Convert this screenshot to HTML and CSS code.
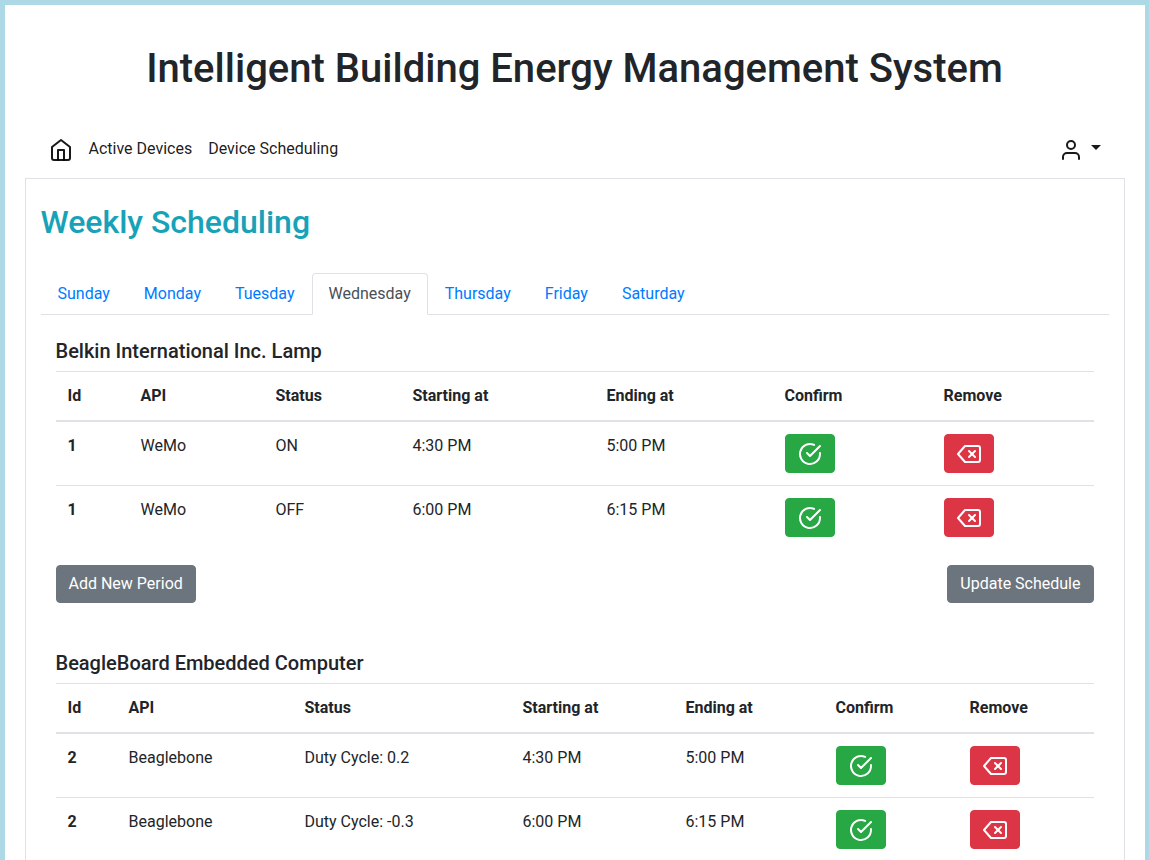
FILE: index.html
```html
<!DOCTYPE html>
<html lang="en">
<head>
<meta charset="utf-8">
<title>Intelligent Building Energy Management System</title>
<link rel="stylesheet" href="styles.css">
</head>
<body>
<svg class="defs" width="0" height="0">
  <symbol id="check" viewBox="0 0 24 24"><path d="M22 11.08V12a10 10 0 1 1-5.93-9.14"/><polyline points="22 4 12 14.01 9 11.01"/></symbol>
  <symbol id="remove" viewBox="0 0 24 24"><path d="M21 4H8l-7 8 7 8h13a2 2 0 0 0 2-2V6a2 2 0 0 0-2-2z"/><line x1="18" y1="9" x2="12" y2="15"/><line x1="12" y1="9" x2="18" y2="15"/></symbol>
</svg>
<div class="app">
  <h1>Intelligent Building Energy Management System</h1>
  <nav class="navbar">
    <a class="home" href="#"><svg class="icon" viewBox="0 0 24 24"><path d="m3 9 9-7 9 7v11a2 2 0 0 1-2 2H5a2 2 0 0 1-2-2z"/><polyline points="9 22 9 12 15 12 15 22"/></svg></a>
    <a href="#">Active Devices</a>
    <a href="#">Device Scheduling</a>
    <a class="user" href="#"><svg class="icon" viewBox="0 0 24 24"><path d="M20 21v-2a4 4 0 0 0-4-4H8a4 4 0 0 0-4 4v2"/><circle cx="12" cy="7" r="4"/></svg><span class="caret"></span></a>
  </nav>
  <main class="panel">
    <h2>Weekly Scheduling</h2>
    <div class="tabs">
      <a href="#">Sunday</a><a href="#">Monday</a><a href="#">Tuesday</a><a class="active" href="#">Wednesday</a><a href="#">Thursday</a><a href="#">Friday</a><a href="#">Saturday</a>
    </div>
    <section class="device">
      <h5>Belkin International Inc. Lamp</h5>
      <table>
        <colgroup><col style="width:73px"><col style="width:135px"><col style="width:137px"><col style="width:194px"><col style="width:178px"><col style="width:159px"><col></colgroup>
        <thead><tr><th>Id</th><th>API</th><th>Status</th><th>Starting at</th><th>Ending at</th><th>Confirm</th><th>Remove</th></tr></thead>
        <tbody>
          <tr><th>1</th><td>WeMo</td><td>ON</td><td>4:30 PM</td><td>5:00 PM</td><td><button class="btn green"><svg class="icon"><use href="#check"/></svg></button></td><td><button class="btn red"><svg class="icon"><use href="#remove"/></svg></button></td></tr>
          <tr><th>1</th><td>WeMo</td><td>OFF</td><td>6:00 PM</td><td>6:15 PM</td><td><button class="btn green"><svg class="icon"><use href="#check"/></svg></button></td><td><button class="btn red"><svg class="icon"><use href="#remove"/></svg></button></td></tr>
        </tbody>
      </table>
      <div class="actions"><button class="btn gray">Add New Period</button><button class="btn gray">Update Schedule</button></div>
    </section>
    <section class="device">
      <h5>BeagleBoard Embedded Computer</h5>
      <table>
        <colgroup><col style="width:61px"><col style="width:176px"><col style="width:218px"><col style="width:163px"><col style="width:150px"><col style="width:134px"><col></colgroup>
        <thead><tr><th>Id</th><th>API</th><th>Status</th><th>Starting at</th><th>Ending at</th><th>Confirm</th><th>Remove</th></tr></thead>
        <tbody>
          <tr><th>2</th><td>Beaglebone</td><td>Duty Cycle: 0.2</td><td>4:30 PM</td><td>5:00 PM</td><td><button class="btn green"><svg class="icon"><use href="#check"/></svg></button></td><td><button class="btn red"><svg class="icon"><use href="#remove"/></svg></button></td></tr>
          <tr><th>2</th><td>Beaglebone</td><td>Duty Cycle: -0.3</td><td>6:00 PM</td><td>6:15 PM</td><td><button class="btn green"><svg class="icon"><use href="#check"/></svg></button></td><td><button class="btn red"><svg class="icon"><use href="#remove"/></svg></button></td></tr>
        </tbody>
      </table>
    </section>
  </main>
</div>
</body>
</html>
```
FILE: styles.css
```css
*, *::before, *::after { box-sizing: border-box; }
html, body { height: 860px; overflow: hidden; }
body { margin: 0; font: 400 16px/24px Roboto, sans-serif; color: #212529; background: #fff; }
.defs { display: block; position: absolute; }
.app { width: 1150px; height: 860px; margin-left: -0.5px; padding: 40px 20px 0; border: 5px solid lightblue; border-bottom: 0; overflow: hidden; }
h1, h2, h5 { margin: 0; font-weight: 500; line-height: 1.2; }
h1 { font-size: 40px; text-align: center; }
a { color: #007bff; text-decoration: none; }
.icon { display: block; width: 24px; height: 24px; fill: none; stroke: currentColor; stroke-width: 2; stroke-linecap: round; stroke-linejoin: round; }
.navbar { display: flex; align-items: center; height: 40px; margin-top: 36px; padding: 0 24px; }
.navbar a { color: rgba(0, 0, 0, .9); margin-right: 16px; }
.navbar .home { margin-top: 2px; }
.navbar .user { display: flex; align-items: center; margin: 2px 0 0 auto; }
.caret { margin: -5px 0 0 8px; border: 5px solid transparent; border-top-color: currentColor; border-bottom: 0; }
.panel { margin-top: 9px; padding: 24px 15px 0; border: 1px solid #dee2e6; height: 760px; }
h2 { font-size: 32px; color: #17a2b8; }
.tabs { display: flex; margin-top: 32px; border-bottom: 1px solid #dee2e6; }
.tabs a { padding: 8px 16px; border: 1px solid transparent; border-radius: 4px 4px 0 0; margin-bottom: -1px; }
.tabs .active { color: #495057; background: #fff; border-color: #dee2e6 #dee2e6 #fff; }
.device { padding: 24px 15px 24px; }
h5 { font-size: 20px; margin-bottom: 8px; }
table { width: 100%; table-layout: fixed; border-collapse: collapse; }
th, td { padding: 12px; text-align: left; vertical-align: top; border-top: 1px solid #dee2e6; }
th { font-weight: 700; }
thead th { border-bottom: 2px solid #dee2e6; }
.btn { display: block; padding: 6px 12px; border: 1px solid; border-radius: 4px; font: inherit; color: #fff; }
.green, .red { height: 39px; }
.green { background: #28a745; border-color: #28a745; }
.red { background: #dc3545; border-color: #dc3545; }
.gray { background: #6c757d; border-color: #6c757d; }
.actions { display: flex; justify-content: space-between; margin-top: 16px; }
```
